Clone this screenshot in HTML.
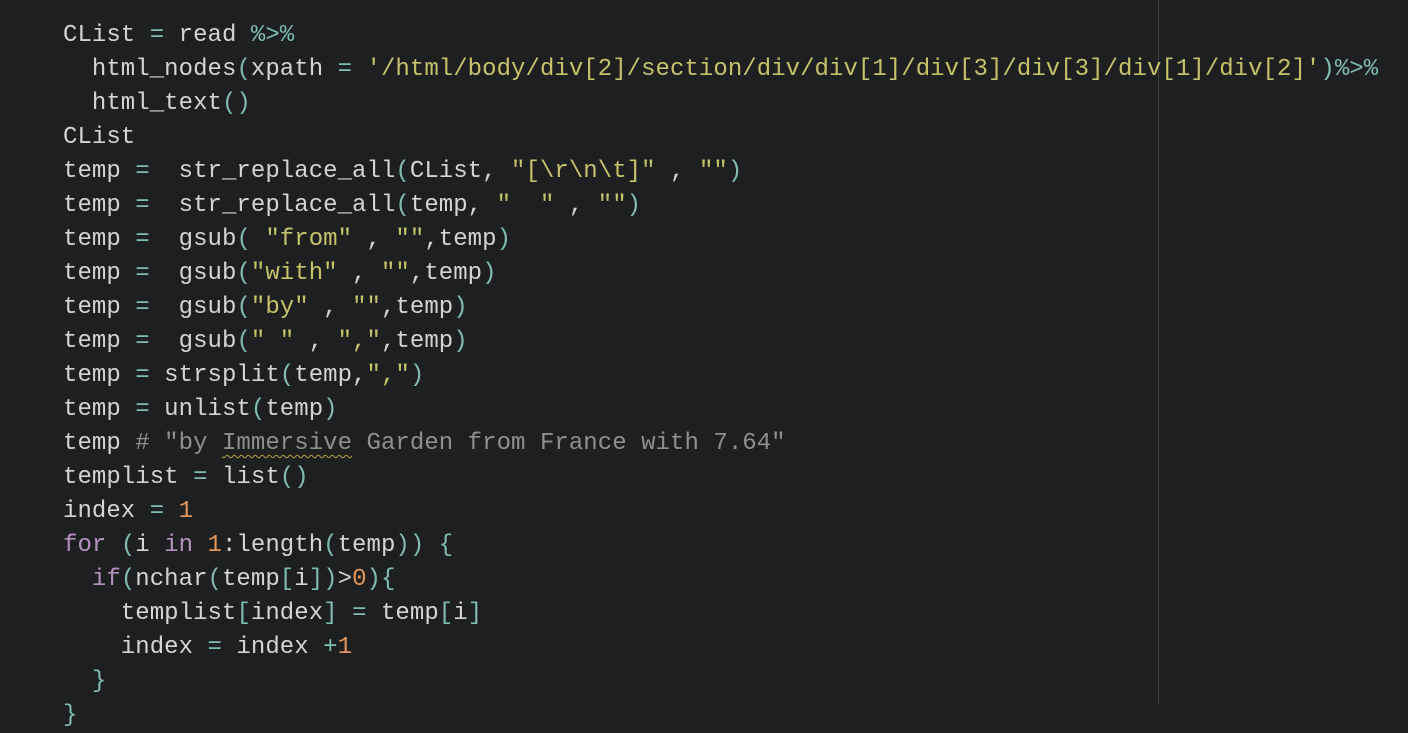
<!DOCTYPE html>
<html><head><meta charset="utf-8"><style>
html,body{margin:0;padding:0;background:#1e1f21;width:1408px;height:704px;overflow:hidden}
pre{position:absolute;left:63px;top:19px;margin:0;font-family:"Liberation Mono",monospace;font-size:24px;line-height:34px;color:#d4d4d4;letter-spacing:0.05px}
.o{color:#7fbdb0}.s{color:#c5c36a}.n{color:#e0965c}.k{color:#b391bd}.c{color:#8e8f90}
.w{text-decoration:underline wavy #b8a040;text-decoration-thickness:1px;text-underline-offset:5px}
.rule{position:absolute;left:1158px;top:0;width:1px;height:704px;background:#3c3d3f}
</style></head><body>
<div class="rule"></div>
<pre>CList <span class="o">=</span> read <span class="o">%&gt;%</span>
  html_nodes<span class="o">(</span>xpath <span class="o">=</span> <span class="s">'/html/body/div[2]/section/div/div[1]/div[3]/div[3]/div[1]/div[2]'</span><span class="o">)%&gt;%</span>
  html_text<span class="o">()</span>
CList
temp <span class="o">=</span>  str_replace_all<span class="o">(</span>CList, <span class="s">"[\r\n\t]"</span> , <span class="s">""</span><span class="o">)</span>
temp <span class="o">=</span>  str_replace_all<span class="o">(</span>temp, <span class="s">"  "</span> , <span class="s">""</span><span class="o">)</span>
temp <span class="o">=</span>  gsub<span class="o">(</span> <span class="s">"from"</span> , <span class="s">""</span>,temp<span class="o">)</span>
temp <span class="o">=</span>  gsub<span class="o">(</span><span class="s">"with"</span> , <span class="s">""</span>,temp<span class="o">)</span>
temp <span class="o">=</span>  gsub<span class="o">(</span><span class="s">"by"</span> , <span class="s">""</span>,temp<span class="o">)</span>
temp <span class="o">=</span>  gsub<span class="o">(</span><span class="s">" "</span> , <span class="s">","</span>,temp<span class="o">)</span>
temp <span class="o">=</span> strsplit<span class="o">(</span>temp,<span class="s">","</span><span class="o">)</span>
temp <span class="o">=</span> unlist<span class="o">(</span>temp<span class="o">)</span>
temp <span class="c"># "by <span class="w">Immersive</span> Garden from France with 7.64"</span>
templist <span class="o">=</span> list<span class="o">()</span>
index <span class="o">=</span> <span class="n">1</span>
<span class="k">for</span> <span class="o">(</span>i <span class="k">in</span> <span class="n">1</span>:length<span class="o">(</span>temp<span class="o">))</span> <span class="o">{</span>
  <span class="k">if</span><span class="o">(</span>nchar<span class="o">(</span>temp<span class="o">[</span>i<span class="o">])</span>&gt;<span class="n">0</span><span class="o">){</span>
    templist<span class="o">[</span>index<span class="o">]</span> <span class="o">=</span> temp<span class="o">[</span>i<span class="o">]</span>
    index <span class="o">=</span> index <span class="o">+</span><span class="n">1</span>
  <span class="o">}</span>
<span class="o">}</span></pre>
</body></html>
